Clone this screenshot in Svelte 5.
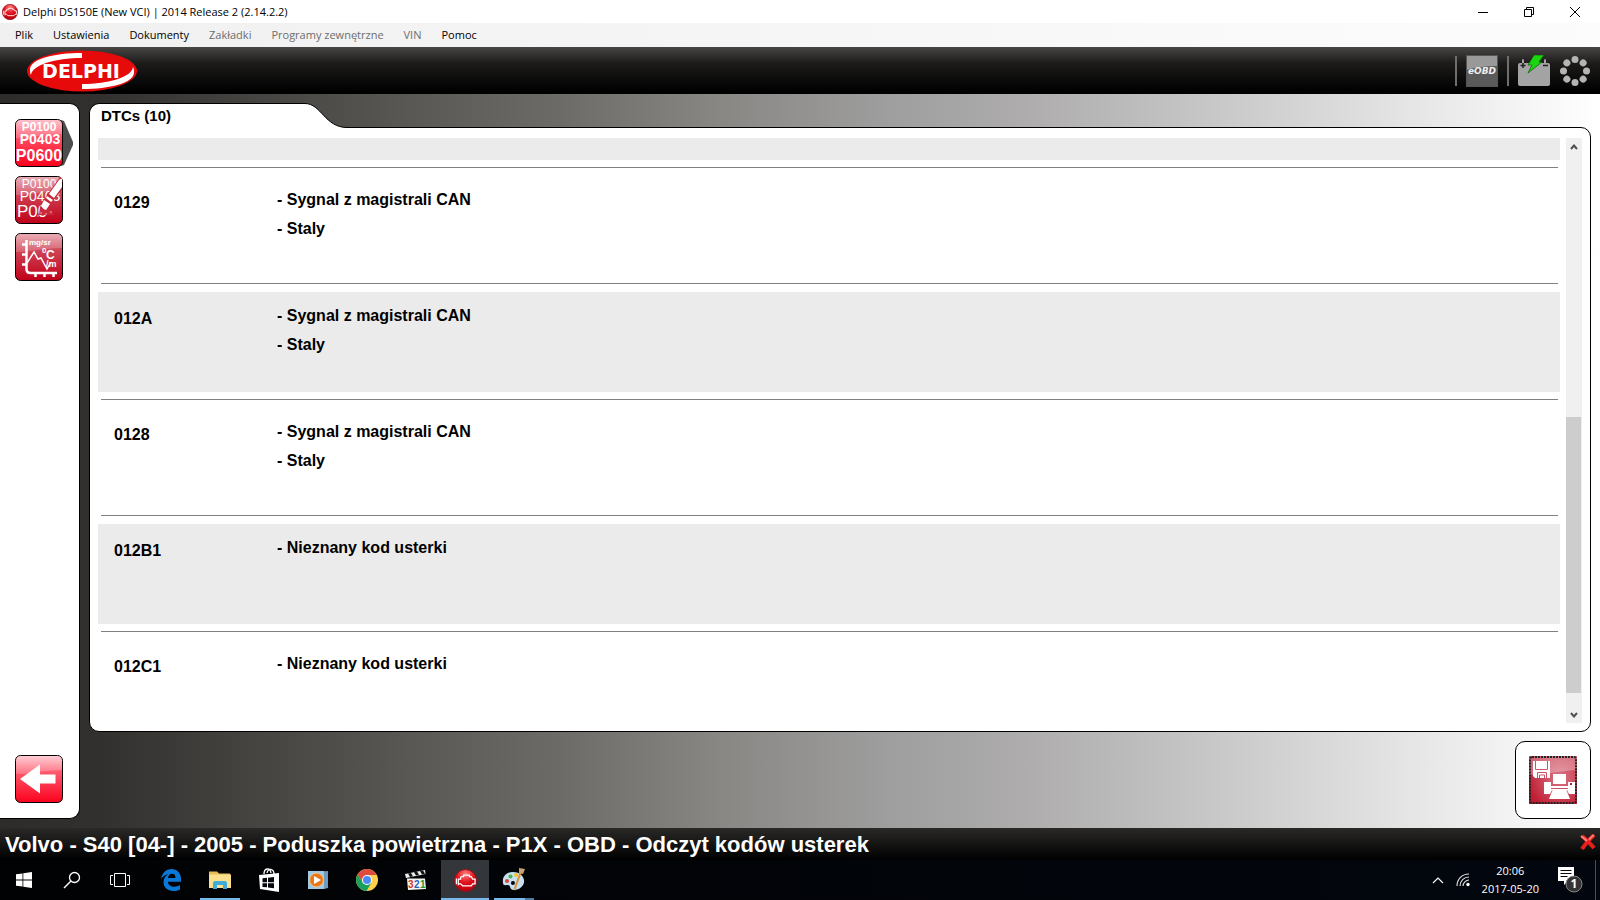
<script>
  const menu = [
    { label: "Plik" },
    { label: "Ustawienia" },
    { label: "Dokumenty" },
    { label: "Zakładki", disabled: true },
    { label: "Programy zewnętrzne", disabled: true },
    { label: "VIN", disabled: true },
    { label: "Pomoc" }
  ];

  const dtcs = [
    { code: "0129", details: ["Sygnal z magistrali CAN", "Staly"] },
    { code: "012A", details: ["Sygnal z magistrali CAN", "Staly"] },
    { code: "0128", details: ["Sygnal z magistrali CAN", "Staly"] },
    { code: "012B1", details: ["Nieznany kod usterki"] },
    { code: "012C1", details: ["Nieznany kod usterki"] }
  ];

  const dots = [0, 45, 90, 135, 180, 225, 270, 315];
</script>

{#snippet engine(size)}
  <svg width={size} height={size} viewBox="0 0 24 24" aria-hidden="true">
    <defs>
      <radialGradient id="ball{size}" cx="50%" cy="20%" r="80%">
        <stop offset="0" stop-color="#ff8080" />
        <stop offset="0.5" stop-color="#e0101c" />
        <stop offset="1" stop-color="#b8000c" />
      </radialGradient>
    </defs>
    <circle cx="12" cy="12" r="11.5" fill="url(#ball{size})" stroke="#8d1218" />
    <path d="M7 8h3V6.500h6V8h2l1.500 2.500H22v5h-2.500L18 17.500H9L7 15.500H4.500V17M4.500 15.500v-5H7V8M2.500 10v6" fill="none" stroke="#fff" stroke-width="1.300" />
  </svg>
{/snippet}

{#snippet gloss(id, top, mid, bottom)}
  <defs>
    <linearGradient {id} x1="0" y1="0" x2="0" y2="1">
      <stop offset="0" stop-color={top} />
      <stop offset="0.35" stop-color={mid} />
      <stop offset="1" stop-color={bottom} />
    </linearGradient>
  </defs>
  <rect x="0.5" y="0.5" width="47" height="47" rx="5" fill="url(#{id})" stroke="#000" />
  <path d="M1 19C14 19 30 15 47 15V5a4 4 0 0 0-4-4H5a4 4 0 0 0-4 4z" fill="#fff" opacity="0.2" />
{/snippet}

<div class="window">
  <header class="titlebar">
    {@render engine(16)}
    <h1>Delphi DS150E (New VCI) | 2014 Release 2 (2.14.2.2)</h1>
    <button type="button" aria-label="Minimalizuj">
      <svg width="12" height="12" viewBox="0 0 12 12"><path d="M1 6.500h10" /></svg>
    </button>
    <button type="button" aria-label="Przywróć">
      <svg width="12" height="12" viewBox="0 0 12 12"><path d="M1.500 3.500h7v7h-7zM3.500 3.500v-2h7v7h-2" /></svg>
    </button>
    <button type="button" aria-label="Zamknij">
      <svg width="12" height="12" viewBox="0 0 12 12"><path d="M1 1l10 10M11 1L1 11" /></svg>
    </button>
  </header>

  <nav class="menubar">
    {#each menu as item}
      <button type="button" disabled={item.disabled}>{item.label}</button>
    {/each}
  </nav>

  <div class="brandbar">
    <svg class="logo" width="110" height="42" viewBox="0 0 110 42" role="img" aria-label="Delphi">
      <ellipse cx="55" cy="21" rx="55" ry="20.500" fill="#e60a0a" />
      <path d="M55 3C27 3 4 9 3 19c0 3 0 4 1 6C5 15 28 8 55 8z" fill="#fff" />
      <path d="M55 39c28 0 51-6 52-16 0-3 0-4-1-6-1 10-24 17-51 17z" fill="#fff" />
      <text x="54" y="28" text-anchor="middle" class="logo-text">DELPHI</text>
    </svg>
    <div class="indicators">
      <i class="divider"></i>
      <svg width="32" height="32" viewBox="0 0 32 32">
        <rect width="32" height="32" fill="#5a5a5a" />
        <path d="M0 0h32v11C20 11 12 12 0 15z" fill="#999" />
        <rect x="0.5" y="0.5" width="31" height="31" fill="none" stroke="#555" />
        <text x="16" y="19" text-anchor="middle" class="eobd-text">eOBD</text>
      </svg>
      <i class="divider"></i>
      <svg width="32" height="32" viewBox="0 0 32 32">
        <path d="M2 8h2V5q1-2 2 0v3h20V5q1-2 2 0v3h2q2 0 2 2v19q0 2-2 2H2q-2 0-2-2V10q0-2 2-2z" fill="#a3a3a3" />
        <path d="M2.500 10.500h5M5 8v5M25 10.500h5" stroke="#222" stroke-width="1.500" />
        <path d="M16 0h10l-5 7h3L10 18l4-8h-4z" fill="#1bd60f" stroke="#0a5a06" stroke-width="0.700" />
      </svg>
      <svg width="32" height="32" viewBox="0 0 32 32">
        {#each dots as angle}
          <circle cx="16" cy="4.500" r="3.500" fill="#b4b4b4" transform="rotate({angle} 16 16)" />
        {/each}
      </svg>
    </div>
  </div>

  <div class="workspace">
    <aside class="sidebar">
      <button type="button" class="tool" aria-label="Odczyt kodów usterek">
        <svg width="60" height="48" viewBox="0 0 60 48">
          <path d="M46 1l3 1 9 21v3l-9 20-3 1z" fill="#4d4d4d" />
          {@render gloss("gA", "#ffb3bf", "#ff5268", "#fb001c")}
          <g fill="#fff" class="codes">
            <text x="24" y="12" text-anchor="middle" font-size="12">P0100</text>
            <text x="25" y="25" text-anchor="middle" font-size="14">P0403</text>
            <text x="24" y="42" text-anchor="middle" font-size="16">P0600</text>
          </g>
        </svg>
      </button>
      <button type="button" class="tool" aria-label="Kasowanie kodów usterek">
        <svg width="48" height="48" viewBox="0 0 48 48">
          {@render gloss("gB", "#e59aa4", "#cf4456", "#c00018")}
          <g fill="#fff" class="codes thin">
            <text x="24" y="12" text-anchor="middle" font-size="12">P0100</text>
            <text x="25" y="25" text-anchor="middle" font-size="14">P0403</text>
            <text x="2" y="41" font-size="17">P00</text>
          </g>
          <path d="M25 31l7-12 13-18 2 1v12L33 31l6 8H24z" fill="#c92a3e" />
          <path d="M34 18L44 4q2-2 3-1v8L39 22z" fill="#fff" />
          <path d="M32 20l6 4-2 2-5-4zM29 24l6 4-4 6q-3-1-5-4z" fill="#fff" />
          <path d="M25 37h2M30 38h2M35 36h2M22 40h2" stroke="#f0a8b0" />
        </svg>
      </button>
      <button type="button" class="tool" aria-label="Dane bieżące">
        <svg width="48" height="48" viewBox="0 0 48 48">
          {@render gloss("gC", "#e59aa4", "#cf4456", "#c00018")}
          <g fill="none" stroke="#fff">
            <path d="M11.500 7v29q0 4 4 4H42M7 11.500h4M7 21.500h4M7 31.500h4M20.500 40v4M29.500 40v4M38.500 40v4" stroke-width="2.500" />
            <path d="M12 30l7-11 4 7 3-1 6 11 4-7" stroke-width="1.500" />
          </g>
          <g fill="#fff" class="codes">
            <text x="14" y="12" font-size="8">mg/sr</text>
            <text x="27" y="20" font-size="8">0</text>
            <text x="31" y="26" font-size="12">C</text>
            <text x="31" y="34" font-size="9">/m</text>
          </g>
        </svg>
      </button>
      <button type="button" class="tool back" aria-label="Wstecz">
        <svg width="48" height="48" viewBox="0 0 48 48">
          {@render gloss("gD", "#ffc4cd", "#ff5a6e", "#fb001c")}
          <path d="M5 24L25 9.500v10h15.500v9H25v10z" fill="#fff" />
        </svg>
      </button>
    </aside>

    <main>
      <div class="tab">
        <h2>DTCs (10)</h2>
        <svg width="48" height="25" viewBox="0 0 48 25">
          <path d="M0 .5h2C18 .5 22 24.500 44 24.500h4V25H0z" fill="#fff" />
          <path d="M0 .5h2C18 .5 22 24.500 44 24.500h4" fill="none" stroke="#000" />
        </svg>
      </div>
      <section class="panel">
        <div class="list">
          <table>
            <tbody>
              <tr class="partial"><td></td></tr>
              {#each dtcs as dtc}
                <tr>
                  <th scope="row">{dtc.code}</th>
                  <td>
                    {#each dtc.details as detail}
                      <p>- {detail}</p>
                    {/each}
                  </td>
                </tr>
              {/each}
            </tbody>
          </table>
        </div>
        <div class="scrollbar">
          <button type="button" aria-label="W górę">
            <svg width="8" height="6" viewBox="0 0 8 6"><path d="M1 5l3-3.500L7 5" /></svg>
          </button>
          <div class="track"><div class="thumb"></div></div>
          <button type="button" aria-label="W dół">
            <svg width="8" height="6" viewBox="0 0 8 6"><path d="M1 1l3 3.500L7 1" /></svg>
          </button>
        </div>
      </section>
      <div class="actions">
        <button type="button" aria-label="Zapisz i drukuj">
          <svg width="48" height="48" viewBox="0 0 48 48">
            <defs>
              <radialGradient id="gE" cx="65%" cy="45%" r="70%">
                <stop offset="0" stop-color="#d97886" />
                <stop offset="1" stop-color="#c01c32" />
              </radialGradient>
            </defs>
            <rect width="48" height="48" fill="url(#gE)" />
            <path d="M0 19C14 19 30 15 48 14V0H0z" fill="#fff" opacity="0.3" />
            <path d="M4 5h17v17H6l-2-2z" fill="#fff" />
            <path d="M6.500 5v8.500h12V5M8.500 22v-5.500h9V22M10.500 22v-3h5v3" fill="none" stroke="#cf5365" />
            <path d="M15 26h7v4h17v-4h7v12h-6l-2-4H23l-2 4h-6z" fill="#fff" />
            <path d="M24 18h13v10H24zM24 33h13l4 10H20z" fill="#fff" />
            <path d="M22 32.500h17" stroke="#cf5365" />
            <rect x="41" y="27" width="2" height="2" fill="#b01c30" />
            <rect x="1" y="1" width="46" height="46" rx="2" fill="none" stroke="#222" stroke-width="2" stroke-dasharray="2 1" />
          </svg>
        </button>
      </div>
    </main>
  </div>

  <footer class="status">
    <span>Volvo - S40 [04-] - 2005 - Poduszka powietrzna - P1X - OBD - Odczyt kodów usterek</span>
    <button type="button" aria-label="Rozłącz">
      <svg width="16" height="16" viewBox="0 0 16 16">
        <path d="M2 2q5 4 12 12M14 1Q7 7 2 15" fill="none" stroke="#e8201c" stroke-width="4" />
        <path d="M1 2q4 3 6 5M14 1q-3 2-5 5" fill="none" stroke="#ff8078" stroke-width="2" />
      </svg>
    </button>
  </footer>

  <nav class="taskbar">
    <button type="button" aria-label="Start">
      <svg width="16" height="16" viewBox="0 0 16 16"><path d="M0 2.300l6.500-.9v6.200H0zM7.300 1.300L16 0v7.600H7.300zM0 8.400h6.500v6.200L0 13.700zM7.300 8.400H16V16l-8.700-1.300z" fill="#fff" /></svg>
    </button>
    <button type="button" aria-label="Szukaj">
      <svg width="18" height="18" viewBox="0 0 18 18"><circle cx="11.500" cy="6.500" r="5" fill="none" stroke="#fff" stroke-width="1.300" /><path d="M8 10l-7 7" stroke="#fff" stroke-width="1.500" /></svg>
    </button>
    <button type="button" aria-label="Widok zadań">
      <svg width="20" height="16" viewBox="0 0 20 16"><path d="M4.500 1.500h11v13h-11zM3 3.500H.5v9H3M17 3.500h2.500v9H17" fill="none" stroke="#fff" /></svg>
    </button>
    <button type="button" class="pinned" aria-label="Edge">
      <svg width="22" height="22" viewBox="0 0 22 22"><path d="M1 10C2 4 6 0 11.500 0 17 0 21 4 21 10v2.700H8c.2 3.300 3 5 6.300 5 2.200 0 4-.6 5.700-1.700v4.500C18 21.500 16 22 13.500 22 7.500 22 3.500 18.500 3.500 13c0-3.500 2-6.300 5-7.700C5.500 5.500 2.500 7.500 1 10zM8 9h7.500c0-2.700-1.200-4.200-3.500-4.200C9.800 4.800 8.300 6.700 8 9z" fill="#0a78d6" /></svg>
    </button>
    <button type="button" class="running" aria-label="Eksplorator plików">
      <svg width="22" height="20" viewBox="0 0 22 20"><path d="M0 1.500h8l2 2h11V18H0z" fill="#e8bd56" /><path d="M0 4.500h22V18H0z" fill="#fbe08e" /><path d="M4 19v-6q0-2 2-2h10q2 0 2 2v6h-4v-4H8v4z" fill="#41acd9" /></svg>
    </button>
    <button type="button" aria-label="Sklep">
      <svg width="22" height="24" viewBox="0 0 22 24"><path d="M6 6C6 0 12-1 13 5M9 5c1-6 7-4 7 1" fill="none" stroke="#fff" stroke-width="1.300" /><path d="M1 7l20-2v19L2 21z" fill="#fff" /><path d="M4.500 10.300l4.500-.5v4.500H4.500zM10 9.700l6-.7v5.300h-6zM4.500 15.300H9v4l-4.500-.4zM10 15.300h6v5l-6-.7z" fill="#05070c" /></svg>
    </button>
    <button type="button" aria-label="Windows Media Player">
      <svg width="20" height="20" viewBox="0 0 20 20"><path d="M5 2l15-1v17l-4 1z" fill="#6c9dbe" /><rect y="1" width="16" height="18" fill="#9cc9e3" /><circle cx="8.500" cy="10" r="7" fill="#e87819" stroke="#f8c496" /><path d="M6 6l7 4-7 4z" fill="#fff" /></svg>
    </button>
    <button type="button" aria-label="Chrome">
      <svg width="22" height="22" viewBox="0 0 22 22"><circle cx="11" cy="11" r="11" fill="#ffd04b" /><path d="M1.500 5.500A11 11 0 0 1 20.500 5.500L20.700 6H11L6.200 13.500z" fill="#dd4b3e" /><path d="M1.500 5.500A11 11 0 0 0 10.500 22L15.500 13.500 11 16 6.500 13.500z" fill="#1aa05d" /><circle cx="11" cy="11" r="5" fill="#fff" /><circle cx="11" cy="11" r="4" fill="#4a8af4" /></svg>
    </button>
    <button type="button" aria-label="Media Player Classic">
      <svg width="22" height="22" viewBox="0 0 22 22"><path d="M0 5l20-4 .5 4L1 9z" fill="#eee" /><path d="M3 4.500l3-.6 2 3.400-3 .6zM9 3.200l3-.6 2 3.400-3 .6zM15 2l3-.6 2 3.400-3 .6z" fill="#111" /><path d="M2 9.500h18l1 10.500-18 1z" fill="#f5f5f0" /><text x="3" y="19" class="clap" fill="#d33a20">3</text><text x="9" y="19" class="clap" fill="#2763c4">2</text><text x="15" y="19" class="clap" fill="#21933b">1</text></svg>
    </button>
    <button type="button" class="running current" aria-label="Delphi DS150E">
      {@render engine(23)}
    </button>
    <button type="button" class="running grouped" aria-label="Paint">
      <svg width="24" height="24" viewBox="0 0 24 24"><path d="M11 4C4 4 0 9 1 15c0 3 3 2 5 2 3 0 1 5 6 5 6 0 11-5 10-10S17 4 11 4zm0 9a2 2 0 1 1-.1 4 2 2 0 0 1 .1-4z" fill="#c5e0f0" /><circle cx="5" cy="13" r="2" fill="#d9433a" /><circle cx="8.500" cy="8.500" r="2" fill="#4cae4c" /><circle cx="14" cy="7" r="2" fill="#f0c330" /><path d="M20 4l-7 19-1-3 6-17z" fill="#e0913a" /><path d="M17 0l6 1-2 5-4-1z" fill="#c9a172" /></svg>
    </button>

    <div class="tray">
      <svg width="12" height="8" viewBox="0 0 12 8"><path d="M1 7l5-5 5 5" fill="none" stroke="#fff" stroke-width="1.200" /></svg>
      <svg width="14" height="14" viewBox="0 0 14 14"><path d="M1 13C1 6 6 1 13 1M4 13c0-5 4-9 9-9M7 13c0-3 3-6 6-6" fill="none" stroke="#ddd" stroke-width="1.200" /><circle cx="12" cy="11.500" r="1.700" fill="#fff" /></svg>
      <time datetime="2017-05-20T20:06"><span>20:06</span><span>2017-05-20</span></time>
      <svg width="26" height="26" viewBox="0 0 26 26"><path d="M1 0h16v14h-6l-4 4v-4H1z" fill="#fff" /><path d="M3.500 3.500h11M3.500 6.500h11M3.500 9.500h7" stroke="#05070c" /><circle cx="17" cy="17" r="8" fill="#333" stroke="#888" /><text x="17" y="21" text-anchor="middle" class="badge">1</text></svg>
      <i class="peek"></i>
    </div>
  </nav>
</div>

<style>
  :global(body) {
    margin: 0;
    overflow: hidden;
  }
  .window {
    display: flex;
    flex-direction: column;
    height: 100vh;
    font-family: "Open Sans", sans-serif;
    font-size: 11px;
    color: #000;
  }
  button {
    display: flex;
    align-items: center;
    justify-content: center;
    padding: 0;
    border: 0;
    background: none;
    font: inherit;
    color: inherit;
  }
  svg {
    display: block;
    flex: none;
  }
  h1,
  h2,
  p {
    margin: 0;
  }

  .titlebar {
    display: flex;
    align-items: center;
    height: 23px;
    padding: 0 2px;
    background: #fff;
  }
  .titlebar h1 {
    flex: 1;
    margin-left: 5px;
    padding-bottom: 1px;
    font-size: 11px;
    font-weight: 400;
  }
  .titlebar button {
    width: 46px;
    height: 20px;
  }
  .titlebar button path {
    fill: none;
    stroke: #000;
  }

  .menubar {
    display: flex;
    align-items: center;
    gap: 20px;
    box-sizing: border-box;
    height: 24px;
    padding: 0 0 2px 15px;
    background: linear-gradient(90deg, #f0f0f0, #fcfcfc);
  }
  .menubar button:disabled {
    color: #6d6d6d;
  }

  .brandbar {
    display: flex;
    align-items: center;
    justify-content: space-between;
    height: 47px;
    padding: 0 9px 0 27px;
    background: linear-gradient(#484644, #1c1b1a 35%, #000 95%);
  }
  .logo-text {
    font: bold 19px "DejaVu Sans", sans-serif;
    fill: #fff;
  }
  .indicators {
    display: flex;
    align-items: center;
    gap: 9px;
  }
  .divider {
    width: 2px;
    height: 30px;
    background: #6e6e6e;
  }
  .eobd-text {
    font: italic bold 9px "DejaVu Sans", sans-serif;
    fill: #eee;
  }

  .workspace {
    flex: 1;
    display: flex;
    gap: 9px;
    min-height: 0;
    padding: 9px 9px 9px 0;
    background: linear-gradient(90deg, #2d2c2b, #31302e 6%, #4d4c49 20%, #6d6b67 35%, #898784 45%, #9f9f9f 56%, #aeacad 64%, #c8c8c8 76%, #e5e5e5 88%, #fff);
  }
  .sidebar {
    box-sizing: border-box;
    display: flex;
    flex-direction: column;
    gap: 9px;
    width: 80px;
    padding: 15px 0 15px 15px;
    border: 1px solid #000;
    border-left: 0;
    border-radius: 0 10px 10px 0;
    background: #fff;
  }
  .tool {
    justify-content: flex-start;
  }
  .back {
    margin-top: auto;
  }
  .codes {
    font-family: "Liberation Sans", Arial, sans-serif;
    font-weight: 700;
  }
  .thin {
    font-weight: 400;
  }

  main {
    flex: 1;
    display: flex;
    flex-direction: column;
    min-width: 0;
    font-family: "Liberation Sans", Arial, sans-serif;
  }
  .tab {
    position: relative;
    display: flex;
    height: 25px;
    margin-bottom: -1px;
  }
  .tab h2 {
    box-sizing: border-box;
    width: 214px;
    padding-left: 11px;
    border: solid #000;
    border-width: 1px 0 0 1px;
    border-radius: 10px 0 0 0;
    background: #fff;
    font-size: 15px;
    line-height: 24px;
  }
  .panel {
    flex: 1;
    display: flex;
    gap: 6px;
    min-height: 0;
    padding: 10px 8px 8px;
    border: 1px solid #000;
    border-radius: 0 10px 10px 10px;
    background: #fff;
  }
  .list {
    flex: 1;
    overflow: hidden;
  }
  table,
  tbody {
    display: block;
  }
  tr {
    position: relative;
    display: grid;
    grid-template-columns: 163px 1fr;
    box-sizing: border-box;
    height: 100px;
    margin-bottom: 16px;
    padding: 9px 16px;
    font-size: 16px;
    font-weight: 700;
    line-height: 29px;
  }
  tr::after {
    content: "";
    position: absolute;
    right: 2px;
    bottom: -8px;
    left: 3px;
    height: 1px;
    background: #808080;
  }
  tr:nth-child(odd) {
    background: #ebebeb;
  }
  tr.partial {
    height: 22px;
  }
  th,
  td {
    padding: 0;
    text-align: left;
  }
  th {
    padding-top: 3px;
  }

  .scrollbar {
    display: flex;
    flex-direction: column;
    width: 16px;
    background: #f0f0f0;
  }
  .scrollbar button {
    height: 17px;
  }
  .scrollbar path {
    fill: none;
    stroke: #505050;
    stroke-width: 2;
  }
  .track {
    flex: 1;
    display: grid;
    grid-template-rows: 262fr 276fr 13fr;
  }
  .thumb {
    grid-row: 2;
    margin-right: 1px;
    background: #cdcdcd;
  }

  .actions {
    align-self: flex-end;
    margin-top: 9px;
    padding: 14px 13px;
    border: 1px solid #000;
    border-radius: 10px;
    background: #fff;
  }

  .status {
    display: flex;
    align-items: center;
    justify-content: space-between;
    height: 32px;
    padding: 0 4px 0 5px;
    background: linear-gradient(#2a2928, #000);
    font: bold 22px "Liberation Sans", Arial, sans-serif;
    color: #fff;
  }
  .status span {
    padding-top: 2px;
  }
  .status button {
    padding-bottom: 4px;
  }

  .taskbar {
    display: flex;
    height: 40px;
    background: linear-gradient(90deg, #010203, #02060e);
    color: #fff;
  }
  .taskbar button {
    position: relative;
    width: 48px;
  }
  .taskbar .pinned {
    margin-left: 3px;
  }
  .pinned ~ button {
    margin-left: 1px;
  }
  .running::after {
    content: "";
    position: absolute;
    right: 4px;
    bottom: 0;
    left: 4px;
    height: 2px;
    background: #76b9ed;
  }
  .current {
    background: #33363a;
  }
  .current::after {
    right: 0;
    left: 0;
  }
  .grouped::after {
    background: linear-gradient(90deg, #76b9ed 78%, #4a7da6 78%);
  }
  .clap {
    font: bold 10px "Liberation Sans", Arial, sans-serif;
  }
  .tray {
    display: flex;
    align-items: center;
    gap: 12px;
    margin-left: auto;
    padding-right: 4px;
  }
  .tray time {
    display: grid;
    margin-right: 6px;
    line-height: 18px;
    text-align: center;
  }
  .badge {
    font: bold 12px "Open Sans", sans-serif;
    fill: #fff;
  }
  .peek {
    width: 1px;
    height: 40px;
    background: #4a4d52;
  }
</style>
